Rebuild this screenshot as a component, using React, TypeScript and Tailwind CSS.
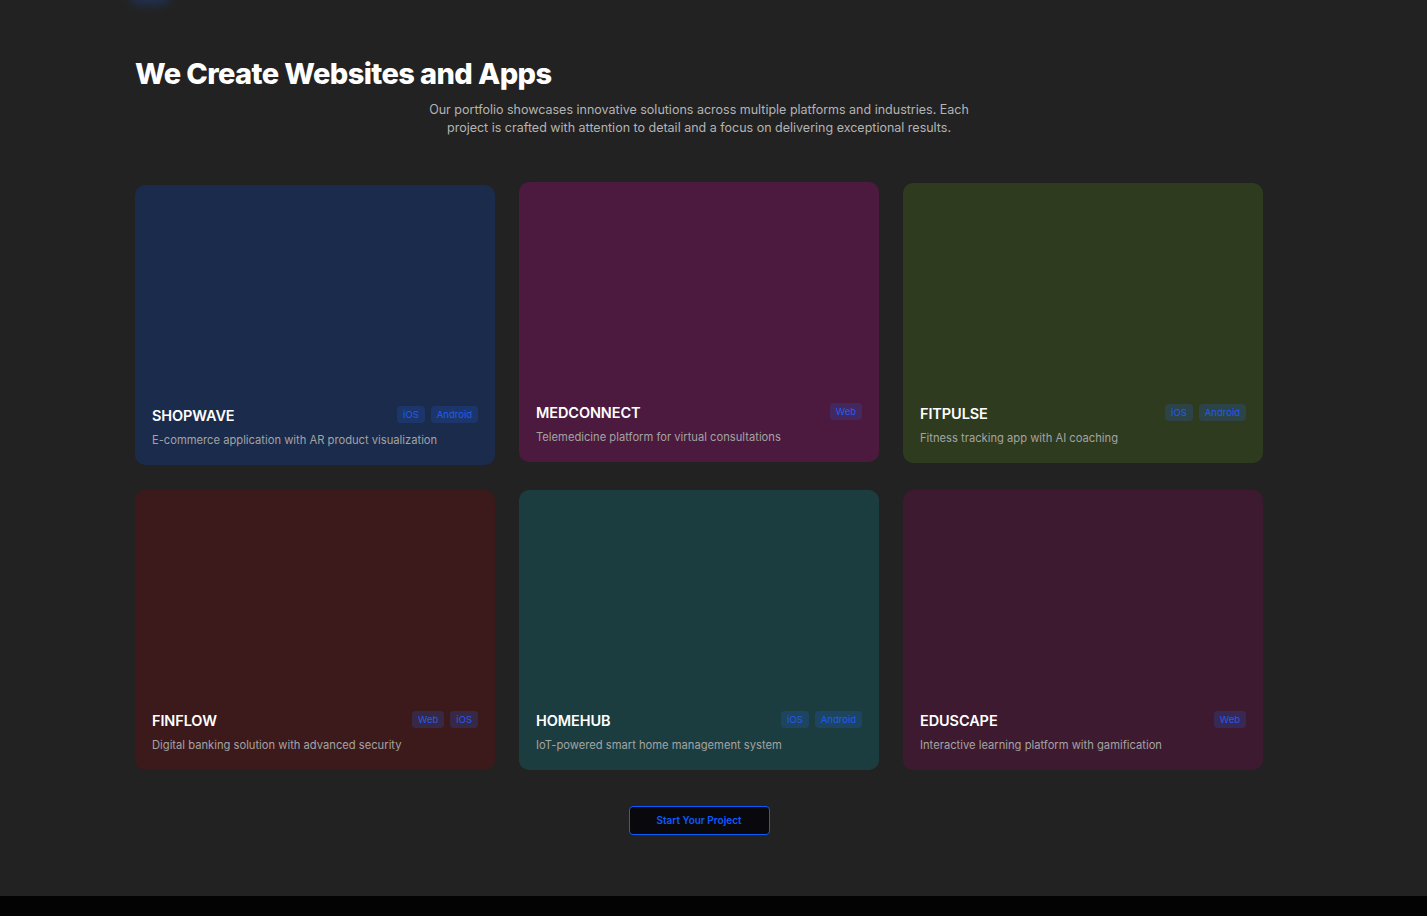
import React from "react";

type Project = {
  name: string;
  desc: string;
  tags: string[];
  bg: string;
  shift: string;
};

const projects: Project[] = [
  { name: "SHOPWAVE", desc: "E-commerce application with AR product visualization", tags: ["iOS", "Android"], bg: "bg-[#1b2b4b]", shift: "-translate-y-px" },
  { name: "MEDCONNECT", desc: "Telemedicine platform for virtual consultations", tags: ["Web"], bg: "bg-[#4c1a3e]", shift: "-translate-y-1" },
  { name: "FITPULSE", desc: "Fitness tracking app with AI coaching", tags: ["iOS", "Android"], bg: "bg-[#2f3b1f]", shift: "-translate-y-[3px]" },
  { name: "FINFLOW", desc: "Digital banking solution with advanced security", tags: ["Web", "iOS"], bg: "bg-[#3c1a1c]", shift: "" },
  { name: "HOMEHUB", desc: "IoT-powered smart home management system", tags: ["iOS", "Android"], bg: "bg-[#1c3d3f]", shift: "" },
  { name: "EDUSCAPE", desc: "Interactive learning platform with gamification", tags: ["Web"], bg: "bg-[#3d1a2f]", shift: "" },
];

function Card({ p }: { p: Project }) {
  return (
    <div className={`${p.bg} ${p.shift} h-[280px] rounded-[10px] flex flex-col justify-end px-[17px] pb-[17px]`}>
      <div className="flex items-center justify-between">
        <h3 className="text-[14.5px] font-semibold text-white tracking-[-0.1px] leading-[20px]">{p.name}</h3>
        <div className="flex gap-[6px] -mt-[4px]">
          {p.tags.map((t) => (
            <span key={t} className="h-[17px] px-[6px] rounded-[4px] bg-[#2563eb]/20 text-[#1f5cf0] text-[9.5px] leading-[17px]">
              {t}
            </span>
          ))}
        </div>
      </div>
      <p className="mt-[6px] text-[11.2px] leading-[16px] text-[#a3a3a3]">{p.desc}</p>
    </div>
  );
}

export default function App() {
  return (
    <div className="relative min-h-[916px] bg-[#222222] overflow-hidden" style={{ fontFamily: "Inter, 'Noto Sans', sans-serif" }}>
      <div className="absolute left-[130px] -top-[14px] w-[40px] h-[18px] rounded-full bg-[#1e3a6e] blur-[6px] opacity-70" />
      <div className="h-[896px] pr-[29px] flex flex-col items-center">
        <div className="w-[1128px] pt-[55px]">
          <h2 className="text-[29px] font-extrabold text-white tracking-[-0.6px] leading-[38px]">We Create Websites and Apps</h2>
          <p className="mx-auto mt-[8px] w-[560px] text-center text-[12.5px] leading-[18px] text-[#b4b4b4]">
            Our portfolio showcases innovative solutions across multiple platforms and industries. Each project is crafted with attention to detail and a focus on delivering exceptional results.
          </p>
          <div className="mt-[49px] grid grid-cols-3 gap-[24px]">
            {projects.map((p) => (
              <Card key={p.name} p={p} />
            ))}
          </div>
          <div className="mt-[36px] flex justify-center">
            <button className="w-[141px] h-[29px] rounded-[4px] border border-[#0b5cff] bg-[#09090d] text-[#0b5cff] text-[10px] font-semibold">
              Start Your Project
            </button>
          </div>
        </div>
      </div>
      <div className="h-[20px] bg-[#030303]" />
    </div>
  );
}
